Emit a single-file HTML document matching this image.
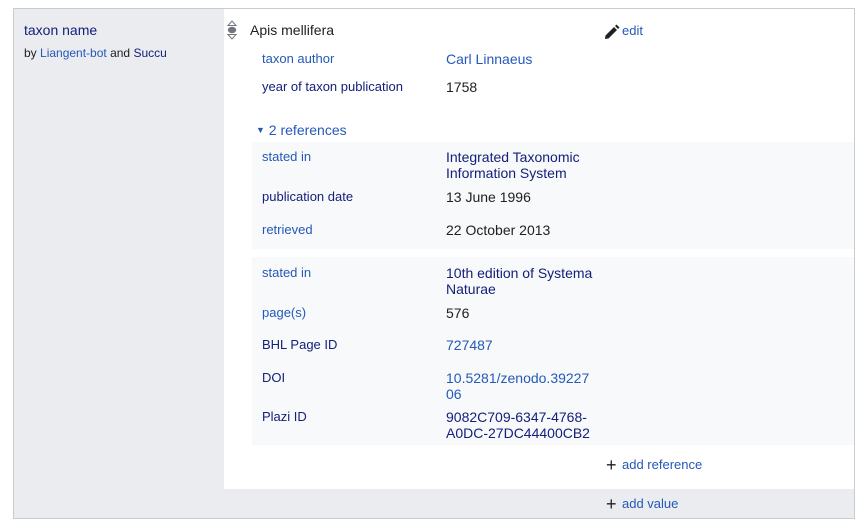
<!DOCTYPE html>
<html><head><meta charset="utf-8"><style>
*{margin:0;padding:0;box-sizing:border-box}
body{width:863px;height:529px;background:#fff;font-family:"Liberation Sans",Arial,sans-serif;position:relative;overflow:hidden}
.a{position:absolute;white-space:nowrap;line-height:16px}
.l{font-size:13px}
.v{font-size:14px;color:#202122}
.b{color:#2459b8}
.n{color:#14207a}
</style></head><body>
<div style="position:absolute;left:13px;top:8px;width:842px;height:511px;border:1px solid #c8ccd1;background:#fff"></div>
<div style="position:absolute;left:14px;top:9px;width:210px;height:509px;background:#eaecf0"></div>
<div style="position:absolute;left:224px;top:489px;width:630px;height:29px;background:#eaecf0"></div>
<div style="position:absolute;left:252px;top:142px;width:602px;height:107px;background:#f8f9fa"></div>
<div style="position:absolute;left:252px;top:257px;width:602px;height:188px;background:#f8f9fa"></div>

<div class="a n" style="left:24px;top:22px;font-size:14px">taxon name</div>
<div class="a" style="left:24px;top:45px;font-size:12px;color:#202122">by <span class="b">Liangent-bot</span> and <span class="n">Succu</span></div>

<svg class="a" style="left:226px;top:19px" width="12" height="22" viewBox="0 0 12 22"><path d="M2 6.5 L6 2 L10 6.5 Z" fill="none" stroke="#72777d" stroke-width="1"/><ellipse cx="6" cy="11" rx="4.2" ry="3.2" fill="#72777d"/><path d="M2 15.5 L6 20 L10 15.5 Z" fill="none" stroke="#72777d" stroke-width="1"/></svg>
<div class="a v" style="left:250px;top:22px">Apis mellifera</div>
<svg class="a" style="left:604px;top:24px" width="16" height="16" viewBox="0 0 16 16"><path d="M1 15 L1.5 11.5 L10 3 L13 6 L4.5 14.5 Z" fill="#202122"/><path d="M11 2 L12.5 0.5 L15.5 3.5 L14 5 Z" fill="#202122"/></svg>
<div class="a l b" style="left:622px;top:23px">edit</div>

<div class="a l b" style="left:262px;top:51px">taxon author</div>
<div class="a v b" style="left:446px;top:51px">Carl Linnaeus</div>
<div class="a l n" style="left:262px;top:79px">year of taxon publication</div>
<div class="a v" style="left:446px;top:79px">1758</div>

<div class="a b" style="left:256px;top:122px;font-size:14px"><span style="font-size:9px;vertical-align:2px">▼</span> 2 references</div>

<div class="a l b" style="left:262px;top:149px">stated in</div>
<div class="a v n" style="left:446px;top:149px">Integrated Taxonomic<br>Information System</div>
<div class="a l n" style="left:262px;top:189px">publication date</div>
<div class="a v" style="left:446px;top:189px">13 June 1996</div>
<div class="a l b" style="left:262px;top:222px">retrieved</div>
<div class="a v" style="left:446px;top:222px">22 October 2013</div>

<div class="a l b" style="left:262px;top:265px">stated in</div>
<div class="a v n" style="left:446px;top:265px">10th edition of Systema<br>Naturae</div>
<div class="a l b" style="left:262px;top:305px">page(s)</div>
<div class="a v" style="left:446px;top:305px">576</div>
<div class="a l n" style="left:262px;top:337px">BHL Page ID</div>
<div class="a v b" style="left:446px;top:337px">727487</div>
<div class="a l n" style="left:262px;top:370px">DOI</div>
<div class="a v b" style="left:446px;top:370px">10.5281/zenodo.39227<br>06</div>
<div class="a l n" style="left:262px;top:409px">Plazi ID</div>
<div class="a v n" style="left:446px;top:409px">9082C709-6347-4768-<br>A0DC-27DC44400CB2</div>

<div class="a" style="left:606px;top:457px;font-size:18px;color:#202122">+</div>
<div class="a l b" style="left:622px;top:457px">add reference</div>
<div class="a" style="left:606px;top:496px;font-size:18px;color:#202122">+</div>
<div class="a l b" style="left:622px;top:496px">add value</div>
</body></html>
